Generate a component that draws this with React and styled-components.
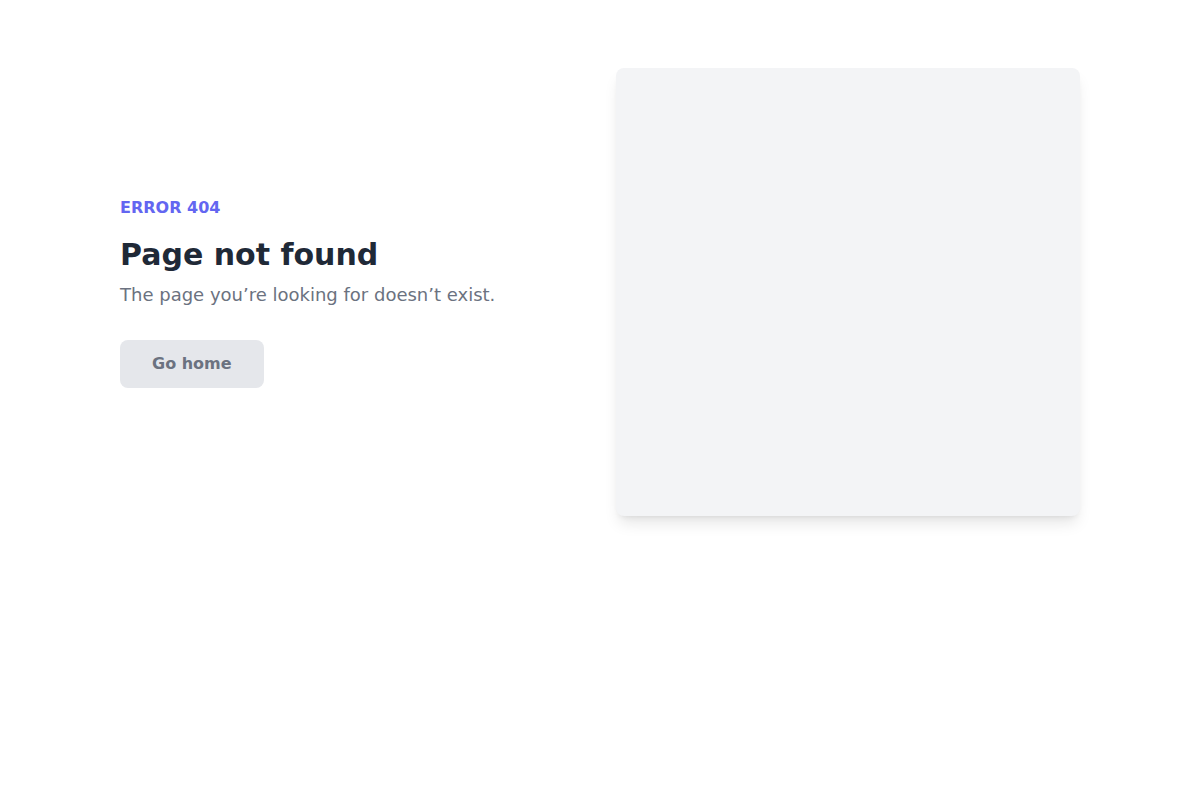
import React from "react";
import styled, { createGlobalStyle } from "styled-components";

const Global = createGlobalStyle`
  html, body { margin: 0; padding: 0; background: #ffffff; }
  body { font-family: "DejaVu Sans", sans-serif; }
`;

const Page = styled.main`
  box-sizing: border-box;
  width: 1200px;
  height: 800px;
  padding: 68px 120px;
  display: grid;
  grid-template-columns: 464px 464px;
  column-gap: 32px;
  align-content: start;
  align-items: center;
`;

const Content = styled.section`
  display: flex;
  flex-direction: column;
  align-items: flex-start;
`;

const Eyebrow = styled.div`
  font-size: 16px;
  line-height: 24px;
  font-weight: 700;
  color: #6366f1;
`;

const Title = styled.h1`
  margin: 15px 0 0;
  font-size: 30px;
  line-height: 40px;
  font-weight: 700;
  color: #1f2937;
`;

const Subtitle = styled.p`
  margin: 6px 0 0;
  font-size: 18px;
  line-height: 28px;
  color: #6b7280;
`;

const Button = styled.button`
  margin-top: 31px;
  height: 48px;
  padding: 0 32px 2px;
  border: none;
  border-radius: 8px;
  background: #e5e7eb;
  color: #6b7280;
  font-family: inherit;
  font-size: 16px;
  font-weight: 700;
  cursor: pointer;
`;

const Card = styled.div`
  height: 448px;
  border-radius: 8px;
  background: #f3f4f6;
  box-shadow: 0 10px 15px -3px rgba(0, 0, 0, 0.1), 0 4px 6px -4px rgba(0, 0, 0, 0.1);
`;

export default function App() {
  return (
    <>
      <Global />
      <Page>
        <Content>
          <Eyebrow>ERROR 404</Eyebrow>
          <Title>Page not found</Title>
          <Subtitle>The page you’re looking for doesn’t exist.</Subtitle>
          <Button>Go home</Button>
        </Content>
        <Card />
      </Page>
    </>
  );
}
